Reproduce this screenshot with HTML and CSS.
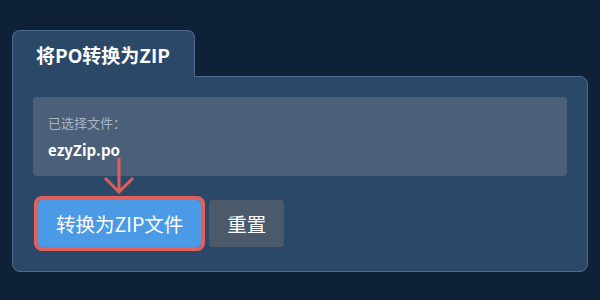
FILE: index.html
```html
<!DOCTYPE html>
<html lang="zh-CN">
<head>
  <meta charset="UTF-8" />
  <title>PO转ZIP</title>
  <link rel="stylesheet" href="styles.css">
</head>
<body>
  <div class="converter">
    <div class="tab">将PO转换为ZIP</div>
    <div class="panel">
      <div class="file-info">
        <p class="file-label">已选择文件：</p>
        <p class="file-name">ezyZip.po</p>
      </div>
      <div class="actions">
        <button class="btn btn-primary">转换为ZIP文件</button>
        <button class="btn btn-reset">重置</button>
      </div>
      <svg class="hint-arrow" width="32" height="36" viewBox="0 0 32 36">
        <path d="M16 0 V33 M2 20 L16 34 L30 20" fill="none" stroke="#de5f59" stroke-width="3"/>
      </svg>
    </div>
  </div>
</body>
</html>
```

FILE: styles.css
```css
body {
  margin: 0;
  background-color: #0f2137;
  font-family: "Noto Sans CJK SC", "Noto Sans", sans-serif;
  color: #ffffff;
}

.converter {
  padding: 30px 12px 0 12px;
  width: 576px;
}

.tab {
  display: inline-block;
  box-sizing: border-box;
  height: 47px;
  padding: 0 24px 0 23px;
  line-height: 48px;
  font-size: 19px;
  font-weight: 700;
  background: #2c4869;
  border: 1px solid #4d6b8d;
  border-bottom: none;
  border-radius: 8px 8px 0 0;
  margin-bottom: -1px;
  position: relative;
  z-index: 1;
}

.panel {
  position: relative;
  background: #2c4869;
  border: 1px solid #4d6b8d;
  border-radius: 0 8px 8px 8px;
  padding: 20px 20px 24px 20px;
}

.file-info {
  background: #4b6078;
  border-radius: 4px;
  height: 79px;
  padding: 16px 15px 0 15px;
  box-sizing: border-box;
}

.file-info p {
  margin: 0;
}

.file-label {
  font-size: 13px;
  color: #a9b5c3;
  line-height: 20px;
}

.file-name {
  margin-top: 7px !important;
  font-size: 15px;
  font-weight: 700;
  line-height: 20px;
}

.actions {
  display: flex;
  gap: 8px;
  margin-top: 24px;
  padding-left: 5px;
}

.btn {
  font-family: inherit;
  font-size: 19.5px;
  color: #ffffff;
  border: none;
  border-radius: 4px;
  height: 47px;
  padding: 0 18px;
  cursor: pointer;
}

.btn-primary {
  background: #4b9ae6;
  outline: 4px solid #e0605a;
  outline-offset: 0;
}

.btn-reset {
  background: #4a5a6b;
}

.hint-arrow {
  position: absolute;
  left: 90px;
  top: 81px;
}
```
